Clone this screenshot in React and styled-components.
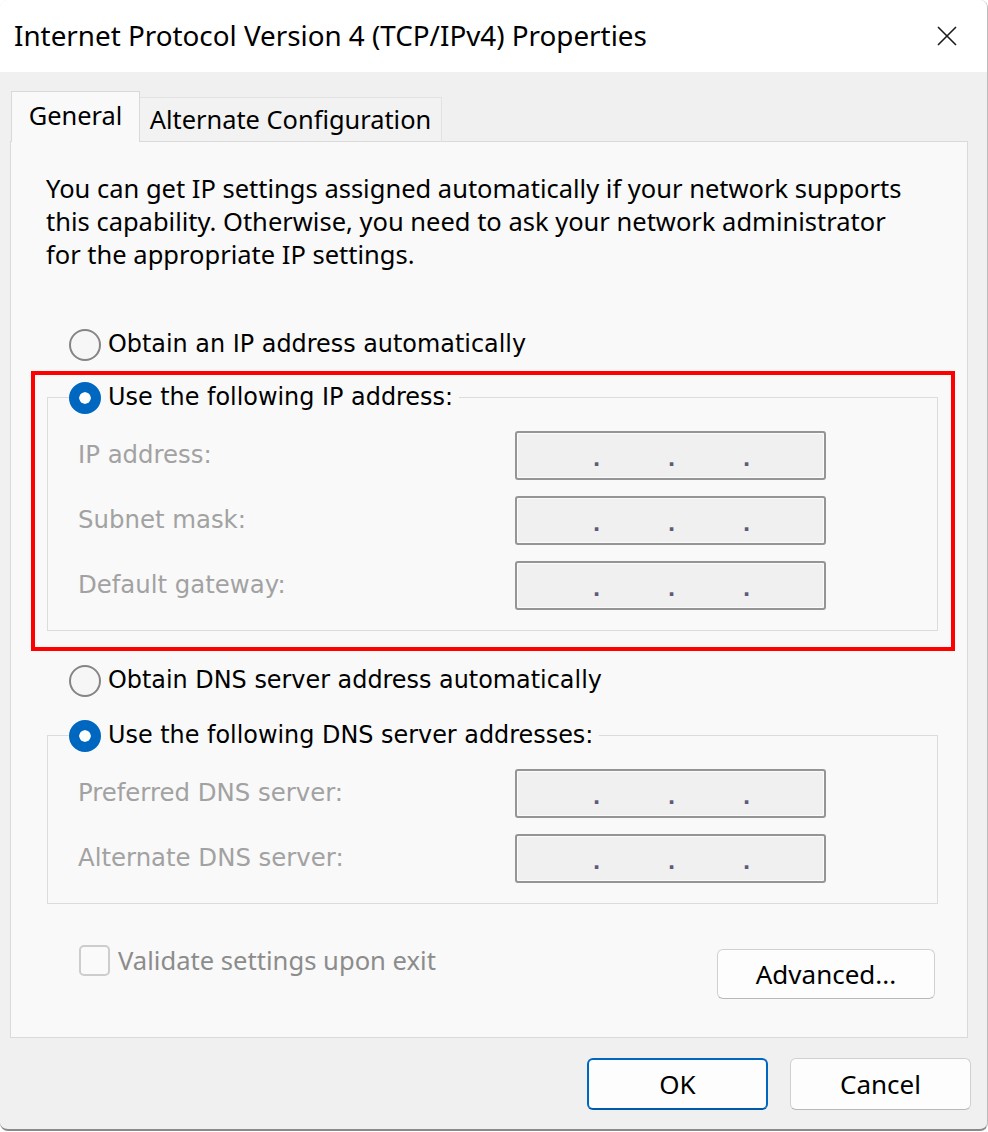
import React from 'react';
import styled, { createGlobalStyle } from 'styled-components';

const SEGOE = `"Noto Sans", "Open Sans", sans-serif`;
const TAHOMA = `"DejaVu Sans", "Liberation Sans", sans-serif`;

const GlobalStyle = createGlobalStyle`
  html, body {
    margin: 0;
    padding: 0;
    background: #ffffff;
  }
  * {
    box-sizing: border-box;
  }
`;

const Window = styled.div`
  width: 988px;
  height: 1131px;
  display: flex;
  flex-direction: column;
  background: #f0f0f0;
  border-radius: 8px;
  border-right: 1px solid #bcbcbc;
  border-bottom: 2px solid #8a8a8a;
  overflow: hidden;
`;

const TitleBar = styled.div`
  height: 72px;
  flex: none;
  background: #ffffff;
  display: flex;
  align-items: center;
  justify-content: space-between;
  padding: 0 30px 0 14px;
`;

const Title = styled.h1`
  margin: 0;
  font: 400 27.8px/1 ${SEGOE};
  color: #000;
`;

const CloseButton = styled.button`
  border: 0;
  padding: 0;
  background: none;
  width: 20px;
  height: 20px;
  display: flex;
`;

const Body = styled.div`
  padding: 20px 16px 0 10px;
  display: flex;
  flex-direction: column;
`;

const TabStrip = styled.div`
  display: flex;
  align-items: flex-end;
  height: 50px;
  padding-left: 1px;
  position: relative;
  z-index: 1;
  margin-bottom: -1px;
`;

const Tab = styled.div`
  height: ${({ $active }) => ($active ? '51px' : '45px')};
  width: ${({ $width }) => $width}px;
  margin-left: ${({ $active }) => ($active ? '0' : '-1px')};
  display: flex;
  align-items: center;
  justify-content: center;
  background: ${({ $active }) => ($active ? '#f9f9f9' : '#f2f2f2')};
  border: 1px solid ${({ $active }) => ($active ? '#d9d9d9' : '#e2e2e2')};
  border-bottom: ${({ $active }) => ($active ? 'none' : '1px solid #dadada')};
  font: 400 25.4px/1 ${SEGOE};
  color: #000;
  padding-bottom: ${({ $active }) => ($active ? '2px' : '0')};
  position: relative;
  z-index: ${({ $active }) => ($active ? 2 : 1)};
`;

const Panel = styled.div`
  width: 958px;
  background: #f9f9f9;
  border: 1px solid #dadada;
  padding: 30px 29px 38px 36px;
  display: flex;
  flex-direction: column;
`;

const Intro = styled.p`
  margin: 0 0 0 -1px;
  font: 400 25.5px/33px ${SEGOE};
  color: #000;
  white-space: nowrap;
`;

const RadioRow = styled.label`
  display: flex;
  align-items: center;
  gap: 7px;
  padding-left: ${({ $indent }) => $indent}px;
  margin-top: ${({ $top }) => $top || 0}px;
  height: 33px;
  font: 400 23.9px/33px ${TAHOMA};
  color: #000;
  white-space: nowrap;
`;

const RadioDot = styled.span`
  width: 32px;
  height: 32px;
  flex: none;
  border-radius: 50%;
  ${({ $checked }) =>
    $checked
      ? `
    background: #0067c0;
    border: 10px solid #0067c0;
    box-shadow: inset 0 0 0 6px #ffffff;
  `
      : `
    background: #f6f6f6;
    border: 2px solid #858585;
  `}
`;

const Highlight = styled.div`
  margin: 10px -17px 0 -16px;
  border: 4px solid #ff0000;
  padding: 6px 13px 16px 12px;
`;

const GroupBox = styled.fieldset`
  margin: ${({ $top }) => $top || 0}px 0 0;
  padding: 0;
  min-width: 0;
  border: 1px solid #dcdcdc;
`;

const GroupLegend = styled.legend`
  margin-left: 21px;
  padding: 0 6px 0 0;
`;

const FieldGrid = styled.div`
  display: grid;
  grid-template-columns: 437px 311px;
  row-gap: 16px;
  align-items: center;
  padding: ${({ $top }) => $top}px 0 20px 30px;
`;

const FieldLabel = styled.span`
  font: 400 24.4px/1 ${TAHOMA};
  color: #a2a2a2;
  white-space: nowrap;
`;

const IpField = styled.div`
  height: 49px;
  display: grid;
  grid-template-columns: repeat(3, 75px);
  padding-left: 42px;
  background: #f0f0f0;
  border: 2px solid #959595;
  border-radius: 3px;
  box-shadow: inset 0 0 0 1px #fbfbfb;
`;

const Octet = styled.span`
  text-align: center;
  font: 700 20px/48px ${TAHOMA};
  color: #5e5a7a;
  margin-top: 2px;
`;

const Footer = styled.div`
  display: flex;
  justify-content: space-between;
  align-items: flex-start;
  margin-top: 40px;
  padding: 0 3px 0 32px;
`;

const CheckRow = styled.label`
  display: flex;
  align-items: center;
  gap: 8px;
  font: 400 25.6px/33px ${SEGOE};
  color: #8c8c8c;
  white-space: nowrap;
`;

const CheckBox = styled.span`
  width: 31px;
  height: 31px;
  flex: none;
  border: 2px solid #cdcdcd;
  border-radius: 5px;
  background: #fafafa;
`;

const Button = styled.button`
  width: ${({ $width }) => $width}px;
  height: ${({ $height }) => $height}px;
  margin-top: ${({ $top }) => $top || 0}px;
  background: #fdfdfd;
  border: ${({ $primary }) => ($primary ? '2px solid #0067c0' : '1px solid #d0d0d0')};
  border-bottom-color: ${({ $primary }) => ($primary ? '#005aa8' : '#b8b8b8')};
  border-radius: 6px;
  font: 400 26px/1 ${SEGOE};
  color: #000;
  padding: 0;
`;

const ButtonBar = styled.div`
  display: flex;
  justify-content: flex-end;
  gap: 22px;
  padding: 20px 0 0;
`;

const ipRows = ['IP address:', 'Subnet mask:', 'Default gateway:'];
const dnsRows = ['Preferred DNS server:', 'Alternate DNS server:'];

function Radio({ checked, children, indent = 22, top }) {
  return (
    <RadioRow $indent={indent} $top={top}>
      <RadioDot $checked={checked} />
      {children}
    </RadioRow>
  );
}

function AddressRows({ rows, top }) {
  return (
    <FieldGrid $top={top}>
      {rows.map((label) => (
        <React.Fragment key={label}>
          <FieldLabel>{label}</FieldLabel>
          <IpField>
            <Octet>.</Octet>
            <Octet>.</Octet>
            <Octet>.</Octet>
          </IpField>
        </React.Fragment>
      ))}
    </FieldGrid>
  );
}

export default function App() {
  return (
    <>
      <GlobalStyle />
      <Window>
        <TitleBar>
          <Title>Internet Protocol Version 4 (TCP/IPv4) Properties</Title>
          <CloseButton aria-label="Close">
            <svg width="20" height="20" viewBox="0 0 20 20">
              <path d="M1 1 L19 19 M19 1 L1 19" stroke="#1a1a1a" strokeWidth="1.6" fill="none" />
            </svg>
          </CloseButton>
        </TitleBar>
        <Body>
          <TabStrip>
            <Tab $active $width={129}>General</Tab>
            <Tab $width={303}>Alternate Configuration</Tab>
          </TabStrip>
          <Panel>
            <Intro>
              You can get IP settings assigned automatically if your network supports
              <br />
              this capability. Otherwise, you need to ask your network administrator
              <br />
              for the appropriate IP settings.
            </Intro>
            <Radio top={57}>Obtain an IP address automatically</Radio>
            <Highlight>
              <GroupBox>
                <GroupLegend>
                  <Radio checked indent={0}>Use the following IP address:</Radio>
                </GroupLegend>
                <AddressRows rows={ipRows} top={17} />
              </GroupBox>
            </Highlight>
            <Radio top={13}>Obtain DNS server address automatically</Radio>
            <GroupBox $top={22}>
              <GroupLegend>
                <Radio checked indent={0}>Use the following DNS server addresses:</Radio>
              </GroupLegend>
              <AddressRows rows={dnsRows} top={17} />
            </GroupBox>
            <Footer>
              <CheckRow>
                <CheckBox />
                Validate settings upon exit
              </CheckRow>
              <Button $width={218} $height={50} $top={5}>Advanced...</Button>
            </Footer>
          </Panel>
          <ButtonBar>
            <Button $primary $width={181} $height={52}>OK</Button>
            <Button $width={181} $height={52}>Cancel</Button>
          </ButtonBar>
        </Body>
      </Window>
    </>
  );
}
